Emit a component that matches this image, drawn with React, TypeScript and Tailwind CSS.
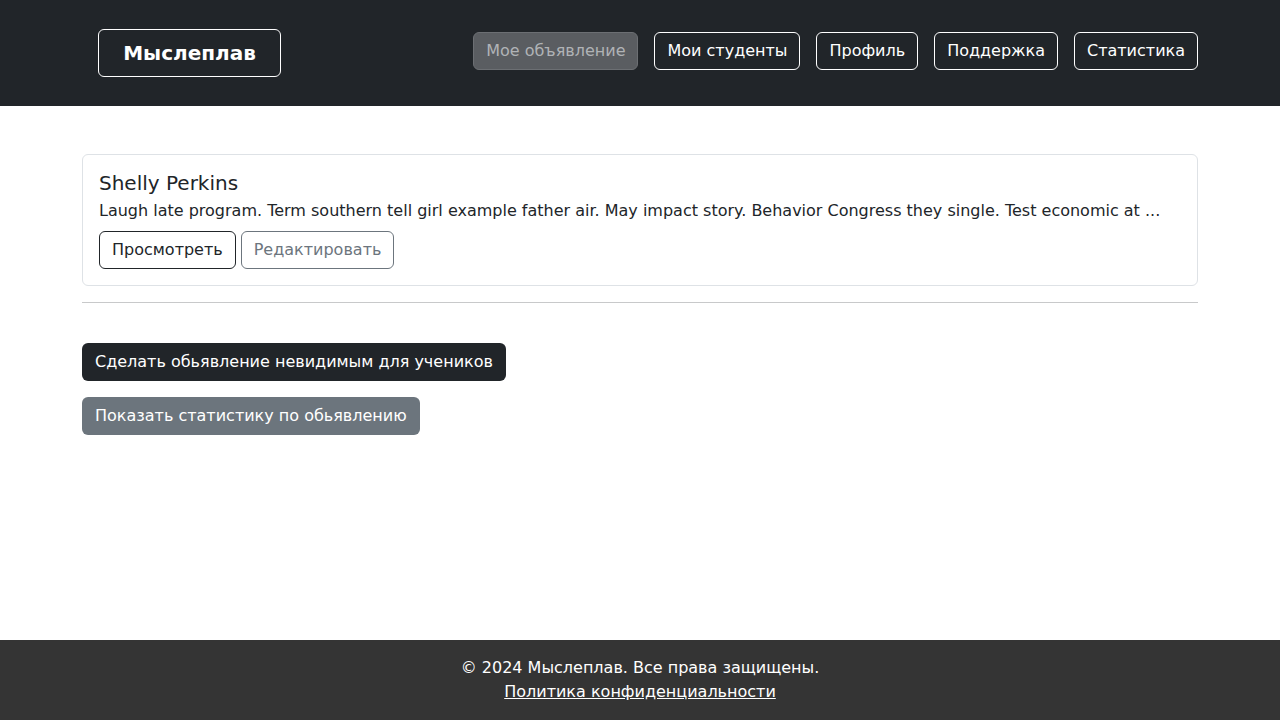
const navItems = ["Мое объявление", "Мои студенты", "Профиль", "Поддержка", "Статистика"];

export default function App() {
  return (
    <div className="min-h-screen flex flex-col bg-white text-[#212529] font-['DejaVu_Sans',sans-serif] text-base leading-6">
      {/* Header */}
      <header className="h-[106px] bg-[#212529] shrink-0">
        <div className="flex items-start justify-between pl-[98px] pr-[82px]">
          <a className="mt-[29px] h-12 w-[183px] flex items-center justify-center border border-white rounded-md text-white text-xl font-bold">
            Мыслеплав
          </a>
          <nav className="mt-8 flex gap-4">
            {navItems.map((item, i) => (
              <button
                key={item}
                className={
                  i === 0
                    ? "h-[38px] px-3 rounded-md border border-[#6c6f73] bg-[#5a5d61] text-[#b0b3b6]"
                    : "h-[38px] px-3 rounded-md border border-white text-white"
                }
              >
                {item}
              </button>
            ))}
          </nav>
        </div>
      </header>

      {/* Main */}
      <main className="flex-1 px-[82px] pt-12">
        <div className="border border-[#dee2e6] rounded-md p-4">
          <h5 className="text-xl leading-6 mb-1">Shelly Perkins</h5>
          <p className="mb-2">
            Laugh late program. Term southern tell girl example father air. May impact story. Behavior Congress they single. Test economic at ...
          </p>
          <div className="flex gap-[5px]">
            <button className="h-[38px] px-3 rounded-md border border-[#212529] text-[#212529]">Просмотреть</button>
            <button className="h-[38px] px-3 rounded-md border border-[#6c757d] text-[#6c757d]">Редактировать</button>
          </div>
        </div>
        <hr className="my-4 border-t border-[#c8c9ca]" />
        <div className="pt-6 flex flex-col items-start gap-4">
          <button className="h-[38px] px-[13px] rounded-md bg-[#212529] text-white">
            Сделать обьявление невидимым для учеников
          </button>
          <button className="h-[38px] px-[13px] rounded-md bg-[#6c757d] text-white">
            Показать статистику по обьявлению
          </button>
        </div>
      </main>

      {/* Footer */}
      <footer className="bg-[#343434] text-white text-center py-4 shrink-0">
        <p>© 2024 Мыслеплав. Все права защищены.</p>
        <a className="underline">Политика конфиденциальности</a>
      </footer>
    </div>
  );
}
